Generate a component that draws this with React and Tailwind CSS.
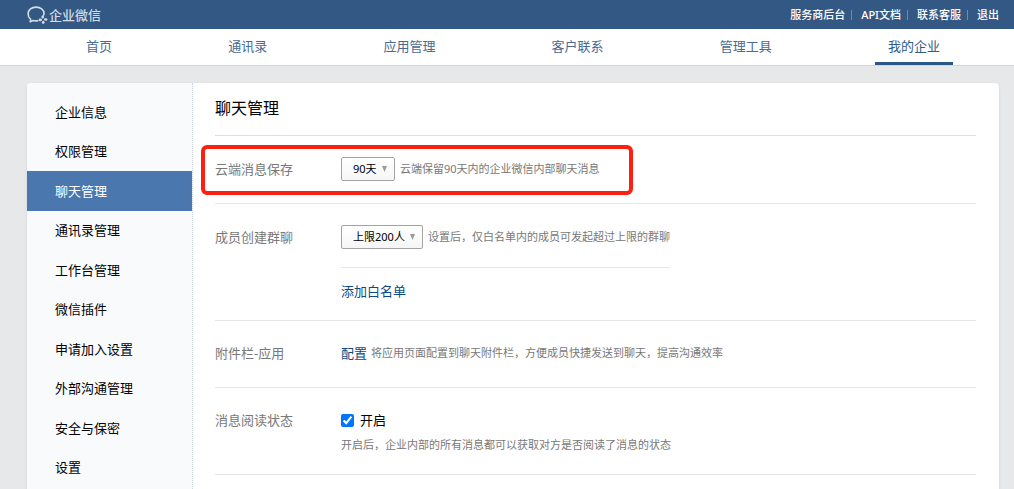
import { useState } from 'react';
import clsx from 'clsx';

const topLinks = ['服务商后台', 'API文档', '联系客服', '退出'];

const navItems = ['首页', '通讯录', '应用管理', '客户联系', '管理工具', '我的企业'];

const sideItems = [
  '企业信息',
  '权限管理',
  '聊天管理',
  '通讯录管理',
  '工作台管理',
  '微信插件',
  '申请加入设置',
  '外部沟通管理',
  '安全与保密',
  '设置',
];

const Logo = () => (
  <svg width="21" height="18" viewBox="0 0 21 18" fill="none" stroke="currentColor" strokeLinecap="round" strokeLinejoin="round" aria-hidden="true">
    <path strokeWidth="1.6" d="M16.600 9C16.900 8.500 17 8 17 7.500C17 3.900 13.500 1.100 9.100 1.100S1.100 3.900 1.100 7.800C1.100 10.200 2 12 3.600 13.200L3.200 15.700L6.300 14.500C7.800 15 9.400 15 10.800 14.700" />
    <g fill="currentColor" stroke="none">
      <ellipse cx="15.700" cy="10.900" rx="1.300" ry="1.700" />
      <ellipse cx="18.700" cy="13.500" rx="1.700" ry="1.300" />
      <ellipse cx="16.200" cy="16.300" rx="1.300" ry="1.600" />
      <ellipse cx="13.300" cy="13.900" rx="1.700" ry="1.300" />
    </g>
  </svg>
);

const Dropdown = ({ id, options, value, onChange, className }) => (
  <div className={clsx('relative shrink-0', className)}>
    <select
      id={id}
      value={value}
      onChange={(e) => onChange(e.target.value)}
      className="block w-full h-6 pl-[11px] appearance-none rounded-xs border border-[#a3a3a3] bg-linear-to-b from-white to-[#f6f6f6] text-[11px] leading-4 text-black outline-none"
    >
      {options.map((opt) => <option key={opt}>{opt}</option>)}
    </select>
    <svg className="absolute right-2 top-[9px] pointer-events-none" width="5" height="6" viewBox="0 0 5 6" fill="#9b9b9b" aria-hidden="true">
      <path d="M0 0H5L2.500 6Z" />
    </svg>
  </div>
);

const Hint = ({ children }) => (
  <p className="text-[11px] leading-4 text-[#787878]">{children}</p>
);

const Row = ({ label, htmlFor, className, children }) => (
  <div className={clsx('relative flex border-b border-[#e4e6e9]', className)}>
    <label htmlFor={htmlFor} className="w-[126px] shrink-0 h-6 leading-6 text-[#787878]">{label}</label>
    <div>{children}</div>
  </div>
);

const App = () => {
  const [activeSide, setActiveSide] = useState('聊天管理');
  const [keepDays, setKeepDays] = useState('90天');
  const [groupLimit, setGroupLimit] = useState('上限200人');
  const [readStatus, setReadStatus] = useState(true);

  return (
    <div className="min-h-screen flex flex-col bg-[#e7e8ea] font-['Noto_Sans','Noto_Sans_CJK_SC',sans-serif] text-[13px] leading-5 text-black">
      <header className="h-[29px] pl-[27px] pr-[15px] flex items-center justify-between bg-[#335883]">
        <a href="#" className="h-7 flex items-center gap-px text-[#d3dde8]">
          <Logo />
          <span className="font-medium leading-4">企业微信</span>
        </a>
        <ul className="flex items-center text-[11px] leading-4 font-medium text-white">
          {topLinks.map((link, i) => (
            <li key={link} className="flex items-center">
              {i > 0 && <span className="w-px h-[10px] ml-[6px] mr-[9px] bg-[#6f8cad]" />}
              <a href="#">{link}</a>
            </li>
          ))}
        </ul>
      </header>

      <nav className="h-[37px] pl-[73px] pr-[61px] flex justify-between bg-white border-b border-[#d4d6d9] text-[#4a6a93]">
        {navItems.map((item, i) => (
          <a
            key={item}
            href="#"
            className={clsx('px-[13px] flex items-center border-b-3', i === 5 ? 'border-[#2a5885] text-[#2f5a8a]' : 'border-transparent')}
          >
            {item}
          </a>
        ))}
      </nav>

      <main className="flex-1 flex mt-[17px] ml-[27px] mr-[15px] rounded-t-sm bg-white shadow-sm overflow-hidden">
        <aside className="w-[166px] shrink-0 pt-[9px] bg-[#f9fafc] border-r border-dotted border-[#cfd6de]">
          <ul className="min-h-[395px] flex flex-col">
            {sideItems.map((item) => (
              <li key={item} className="flex-1 flex">
                <a
                  href="#"
                  onClick={() => setActiveSide(item)}
                  className={clsx('flex-1 pl-7 flex items-center', item === activeSide && 'bg-[#4a77ad] text-white')}
                >
                  {item}
                </a>
              </li>
            ))}
          </ul>
        </aside>

        <section className="flex-1 pl-[22px] pr-[23px]">
          <h1 className="h-[53px] pb-[2px] flex items-center border-b border-[#dcdfe3] text-base">聊天管理</h1>

          <Row label="云端消息保存" htmlFor="keep-days" className="pt-[21px] pb-[22px]">
            <div className="flex items-center gap-[5px]">
              <Dropdown id="keep-days" className="w-[54px]" options={['90天', '180天']} value={keepDays} onChange={setKeepDays} />
              <Hint>云端保留90天内的企业微信内部聊天消息</Hint>
            </div>
            <div className="absolute -left-[14px] top-[9px] w-[432px] h-[50px] rounded-md border-4 border-[#fc2010] pointer-events-none" />
          </Row>

          <Row label="成员创建群聊" htmlFor="group-limit" className="pt-[21px] pb-4">
            <div className="flex items-center gap-[5px] pb-[18px] border-b border-[#e4e6e9]">
              <Dropdown id="group-limit" className="w-[82px]" options={['上限200人', '上限500人']} value={groupLimit} onChange={setGroupLimit} />
              <Hint>设置后，仅白名单内的成员可发起超过上限的群聊</Hint>
            </div>
            <a href="#" className="block mt-3 mb-[2px] h-[22px] leading-[22px] text-[#0d4a82]">添加白名单</a>
          </Row>

          <Row label="附件栏-应用" className="pt-5 pb-[22px]">
            <div className="flex items-center gap-1 h-6">
              <a href="#" className="text-[#0d4a82]">配置</a>
              <Hint>将应用页面配置到聊天附件栏，方便成员快捷发送到聊天，提高沟通效率</Hint>
            </div>
          </Row>

          <Row label="消息阅读状态" htmlFor="read-status" className="pt-5 pb-[21px]">
            <label className="flex items-center gap-[6px] h-6">
              <input
                id="read-status"
                type="checkbox"
                checked={readStatus}
                onChange={(e) => setReadStatus(e.target.checked)}
                className="size-[13px] accent-[#0075ff]"
              />
              开启
            </label>
            <div className="h-[21px] flex items-end">
              <Hint>开启后，企业内部的所有消息都可以获取对方是否阅读了消息的状态</Hint>
            </div>
          </Row>
        </section>
      </main>
    </div>
  );
};

export default App;
